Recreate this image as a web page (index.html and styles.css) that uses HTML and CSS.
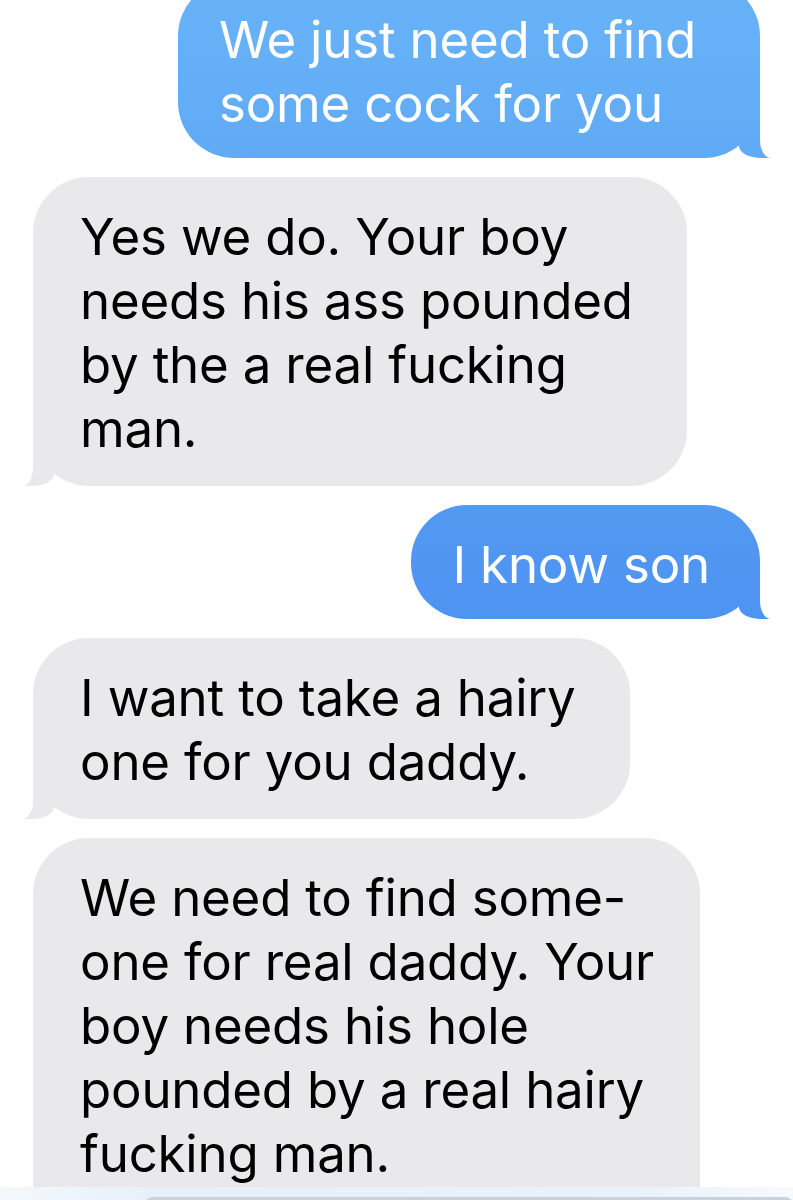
FILE: index.html
```html
<!DOCTYPE html>
<html lang="en">
<head>
  <meta charset="UTF-8">
  <title>Messages</title>
  <link rel="stylesheet" href="styles.css">
</head>
<body>

<div class="thread">
  <div class="bubble sent first">We just need to find<br>some cock for you</div>

  <div class="bubble received">Yes we do. Your boy<br>needs his ass pounded<br>by the a real fucking<br>man.</div>

  <div class="bubble sent">I know son</div>

  <div class="bubble received">I want to take a hairy<br>one for you daddy.</div>

  <div class="bubble received last">We need to find some-<br>one for real daddy. Your<br>boy needs his hole<br>pounded by a real hairy<br>fucking man.<br>&nbsp;</div>
</div>

<!-- compose bar peeking in at the bottom -->
<div class="composer">
  <div class="field"></div>
</div>

</body>
</html>
```

FILE: styles.css
```css
body {
  margin: 0;
  padding: 0;
  background: #fff;
  font-family: 'Inter', 'Liberation Sans', sans-serif;
  overflow: hidden;
  height: 1200px;
}

.thread {
  display: flex;
  flex-direction: column;
  gap: 19px;
  padding: 0 33px;
}

.bubble {
  position: relative;
  padding: 28px 54px 25px 47px;
  border-radius: 56px;
  font-size: 51px;
  line-height: 64px;
  white-space: nowrap;
  letter-spacing: -0.2px;
}

.bubble.received {
  align-self: flex-start;
  background: #e9e9eb;
  color: #000;
}

.bubble.sent {
  align-self: flex-end;
  padding: 28px 50px 22px 41px;
  color: #fff;
  background: linear-gradient(180deg, #67b2f7 0px, #5aa4f4 300px, #4b8ff0 700px) fixed;
}

.bubble.first {
  margin-top: -20px;
  padding-right: 64px;
}

.bubble.last {
  padding-right: 46px;
}

/* tails */
.bubble::before,
.bubble::after {
  content: "";
  position: absolute;
  bottom: 0;
  height: 60px;
}

.bubble.received::before {
  left: -11px;
  width: 32px;
  background: #e9e9eb;
  border-bottom-right-radius: 22px 12px;
}

.bubble.received::after {
  left: -40px;
  width: 40px;
  background: #fff;
  border-bottom-right-radius: 11px 18px;
}

.bubble.sent::before {
  right: -11px;
  width: 32px;
  background: linear-gradient(180deg, #67b2f7 0px, #5aa4f4 300px, #4b8ff0 700px) fixed;
  border-bottom-left-radius: 22px 12px;
}

.bubble.sent::after {
  right: -40px;
  width: 40px;
  background: #fff;
  border-bottom-left-radius: 11px 18px;
}

.composer {
  position: fixed;
  left: 0;
  right: 0;
  top: 1187px;
  height: 13px;
  background: linear-gradient(90deg, #f4f8fc 0%, #e6effa 20%, #e8f1fb 80%, #f7fafd 100%);
}

.field {
  margin: 10px 0 0 145px;
  height: 10px;
  border-radius: 8px 8px 0 0;
  background: #c8d2dc;
}
```
